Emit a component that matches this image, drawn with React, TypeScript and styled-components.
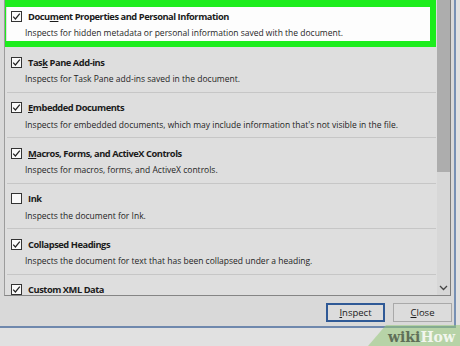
import styled, { createGlobalStyle } from "styled-components";

type Item = {
  title: string;
  accessKey?: number;
  desc: string;
  checked: boolean;
  highlighted?: boolean;
};

const items: Item[] = [
  {
    title: "Document Properties and Personal Information",
    accessKey: 4,
    desc: "Inspects for hidden metadata or personal information saved with the document.",
    checked: true,
    highlighted: true,
  },
  {
    title: "Task Pane Add-ins",
    accessKey: 3,
    desc: "Inspects for Task Pane add-ins saved in the document.",
    checked: true,
  },
  {
    title: "Embedded Documents",
    accessKey: 0,
    desc: "Inspects for embedded documents, which may include information that's not visible in the file.",
    checked: true,
  },
  {
    title: "Macros, Forms, and ActiveX Controls",
    accessKey: 0,
    desc: "Inspects for macros, forms, and ActiveX controls.",
    checked: true,
  },
  {
    title: "Ink",
    desc: "Inspects the document for Ink.",
    checked: false,
  },
  {
    title: "Collapsed Headings",
    desc: "Inspects the document for text that has been collapsed under a heading.",
    checked: true,
  },
  {
    title: "Custom XML Data",
    desc: "Inspects for custom XML data stored with this document.",
    checked: true,
  },
];

const Title = ({ text, accessKey }: { text: string; accessKey?: number }) => {
  if (accessKey === undefined) return <TitleText>{text}</TitleText>;
  return (
    <TitleText>
      {text.slice(0, accessKey)}
      <u>{text[accessKey]}</u>
      {text.slice(accessKey + 1)}
    </TitleText>
  );
};

const App = (): JSX.Element => {
  return (
    <Page>
      <GlobalStyle />
      <Dialog>
        <ListFrame>
          <Items>
            {items.map((item) => (
              <Row key={item.title} $highlighted={item.highlighted}>
                <TitleLine>
                  <Checkbox>
                    {item.checked && (
                      <svg width="9" height="9" viewBox="0 0 9 9">
                        <polyline
                          points="1.2,4.6 3.4,7 7.8,1.6"
                          fill="none"
                          stroke="#222"
                          strokeWidth="1.2"
                        />
                      </svg>
                    )}
                  </Checkbox>
                  <Title text={item.title} accessKey={item.accessKey} />
                </TitleLine>
                <Desc>{item.desc}</Desc>
              </Row>
            ))}
          </Items>
          <Scrollbar>
            <Thumb />
            <ArrowBox>
              <svg width="9" height="6" viewBox="0 0 9 6">
                <polyline points="1,1 4.5,4.5 8,1" fill="none" stroke="#444" strokeWidth="1.3" />
              </svg>
            </ArrowBox>
          </Scrollbar>
        </ListFrame>
        <Footer>
          <Button $primary>
            <u>I</u>nspect
          </Button>
          <Button>
            <u>C</u>lose
          </Button>
        </Footer>
      </Dialog>
      <Watermark>
        <WikiText>wiki</WikiText>
        <HowText>How</HowText>
      </Watermark>
    </Page>
  );
};

export default App;

const GlobalStyle = createGlobalStyle`
  html, body {
    margin: 0;
    padding: 0;
    background: #e2e2e2;
  }
  body {
    font-family: "Open Sans", "Noto Sans", sans-serif;
  }
`;

const Page = styled.div`
  position: relative;
  width: 460px;
  height: 346px;
  overflow: hidden;
  background: #e1e1e1;
`;

const Dialog = styled.div`
  width: 454px;
  height: 326px;
  background: #d9d9d9;
  border-right: 2px solid #7790b4;
  border-bottom: 2px solid #6f88ad;
  display: flex;
  flex-direction: column;
`;

const ListFrame = styled.div`
  height: 295px;
  margin-left: 4px;
  margin-right: 3px;
  border-left: 1px solid #9c9c9c;
  border-right: 1px solid #7c7c7c;
  border-bottom: 1px solid #858585;
  background: #dedede;
  display: flex;
  overflow: hidden;
`;

const Items = styled.div`
  flex: 1;
  padding-left: 2px;
  margin-right: 1px;
  display: flex;
  flex-direction: column;
`;

const Row = styled.div<{ $highlighted?: boolean }>`
  position: relative;
  flex: none;
  height: ${(p) => (p.$highlighted ? "47px" : "45.6px")};
  padding-top: ${(p) => (p.$highlighted ? "9px" : "8px")};
  box-sizing: border-box;
  border-bottom: 1px solid #c6c6c6;
  background: ${(p) => (p.$highlighted ? "#fdfdfd" : "transparent")};

  ${(p) =>
    p.$highlighted &&
    `
    &::after {
      content: "";
      position: absolute;
      top: 0;
      bottom: -1px;
      left: -7px;
      right: 0;
      border: 6px solid #1ded1d;
      border-top-width: 7px;
    }
  `}
`;

const TitleLine = styled.div`
  display: flex;
  align-items: center;
  gap: 6px;
  padding-left: 4px;
  height: 14px;
`;

const Checkbox = styled.span`
  width: 11px;
  height: 11px;
  box-sizing: border-box;
  border: 1px solid #333;
  background: #fafafa;
  display: flex;
  align-items: center;
  justify-content: center;
`;

const TitleText = styled.span`
  font-size: 9.3px;
  font-weight: 700;
  color: #1b1b1b;
  white-space: nowrap;
  letter-spacing: -0.45px;
`;

const Desc = styled.div`
  margin-top: 3px;
  padding-left: 18px;
  font-size: 8.5px;
  color: #1f1f1f;
  white-space: nowrap;
  line-height: 14px;
`;

const Scrollbar = styled.div`
  width: 13px;
  flex: none;
  background: #d7d7d7;
  display: flex;
  flex-direction: column;
  justify-content: space-between;
`;

const Thumb = styled.div`
  height: 172px;
  background: #adadad;
`;

const ArrowBox = styled.div`
  height: 14px;
  display: flex;
  align-items: center;
  justify-content: center;
`;

const Footer = styled.div`
  flex: 1;
  display: flex;
  justify-content: flex-end;
  align-items: flex-start;
  gap: 8px;
  padding: 7px 2px 0 0;
`;

const Button = styled.div<{ $primary?: boolean }>`
  width: 59px;
  height: 19px;
  box-sizing: border-box;
  border: ${(p) => (p.$primary ? "2px solid #2f5996" : "1px solid #a9a9a9")};
  background: #dcdcdc;
  font-size: 9.5px;
  color: #1b1b1b;
  display: flex;
  align-items: center;
  justify-content: center;
`;

const Watermark = styled.div`
  position: absolute;
  right: 0;
  bottom: 0;
  width: 92px;
  height: 21px;
  background: rgba(150, 200, 120, 0.55);
  clip-path: polygon(18px 0, 100% 0, 100% 100%, 0 100%);
  display: flex;
  align-items: flex-end;
  justify-content: flex-end;
  padding-right: 5px;
  box-sizing: border-box;
  font-family: "DejaVu Serif", serif;
  font-weight: 700;
  font-size: 14px;
  line-height: 18px;
`;

const WikiText = styled.span`
  color: #5f6f58;
`;

const HowText = styled.span`
  color: #f2f6ee;
`;
